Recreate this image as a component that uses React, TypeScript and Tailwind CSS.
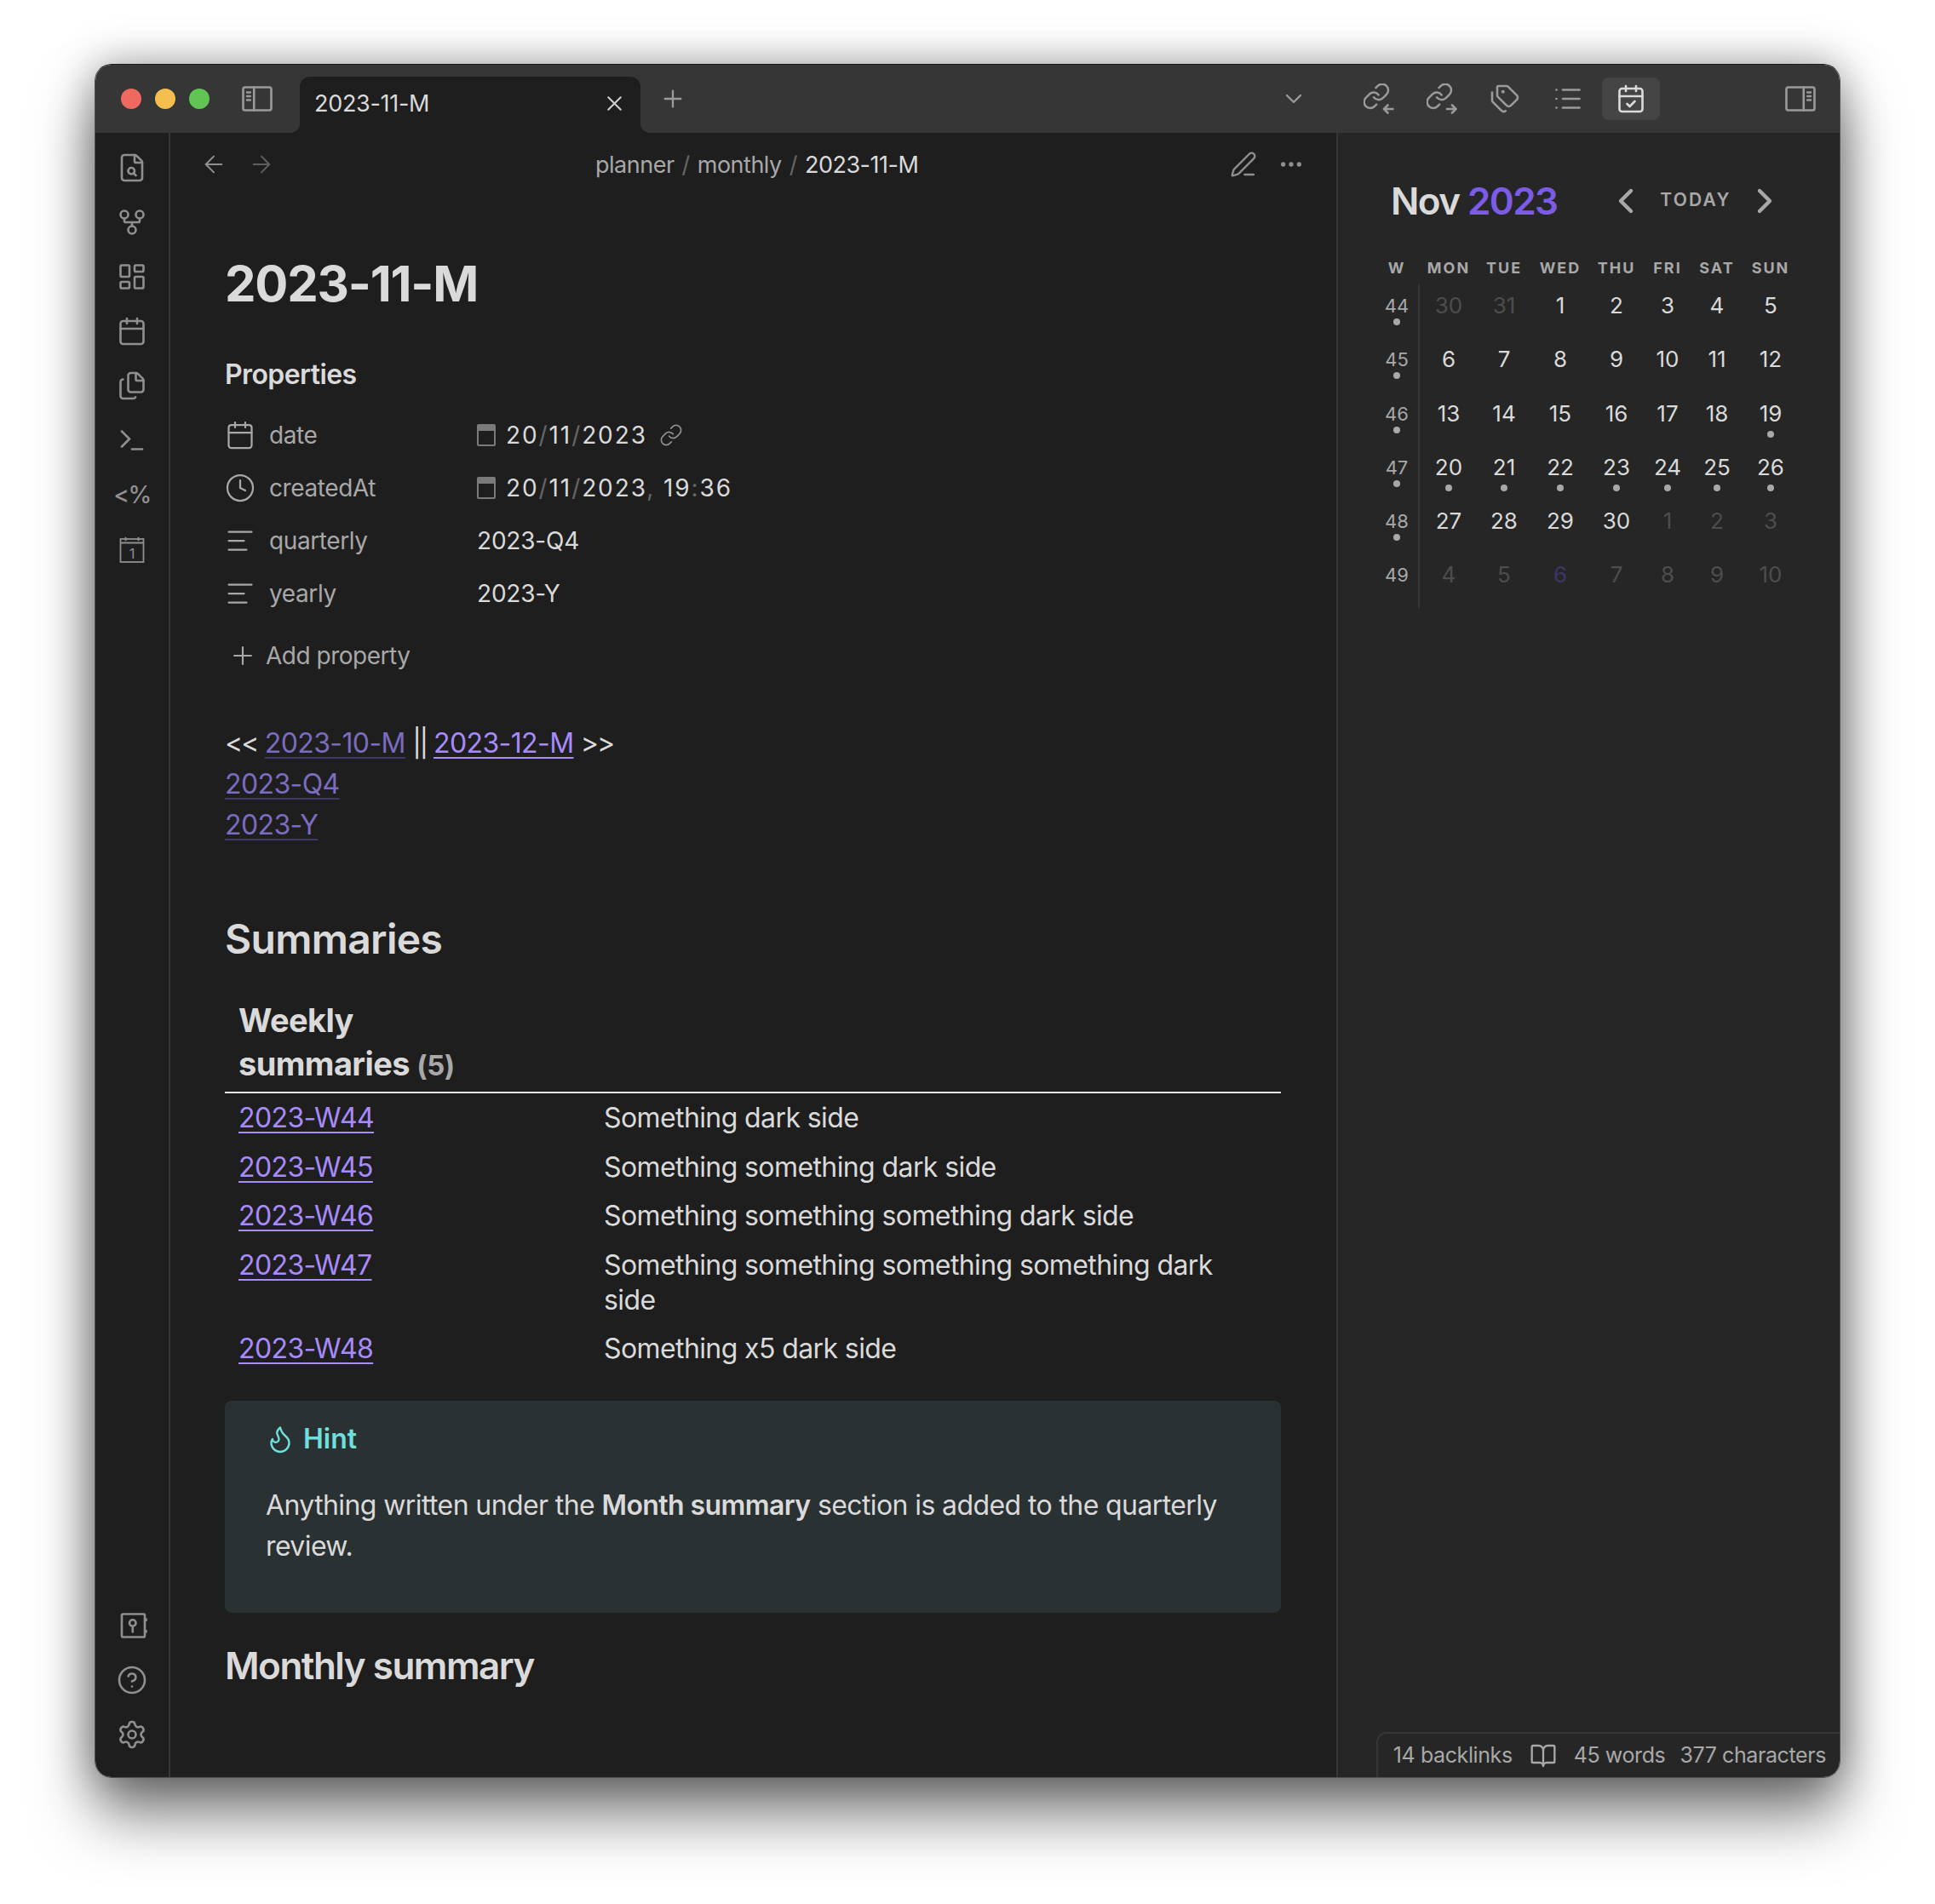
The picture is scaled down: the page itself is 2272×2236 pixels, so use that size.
import {
  ArrowLeft,
  ArrowRight,
  AlignLeft,
  BookOpen,
  Calendar,
  CalendarCheck,
  ChevronDown,
  ChevronLeft,
  ChevronRight,
  CircleHelp,
  Clock,
  Ellipsis,
  Files,
  FileSearch,
  Flame,
  GitFork,
  LayoutDashboard,
  Link,
  List,
  PenLine,
  Plus,
  Settings,
  Tags,
  Terminal,
  X,
} from 'lucide-react'
import type { ReactNode } from 'react'

const CHAIN_A = 'M10 13a5 5 0 0 0 7.54.54l3-3a5 5 0 0 0-7.07-7.07l-1.72 1.71'
const CHAIN_B = 'M14 11a5 5 0 0 0-7.54-.54l-3 3a5 5 0 0 0 7.07 7.07l1.71-1.71'

function Svg({ children, size = 36 }: { children: ReactNode; size?: number }) {
  return (
    <svg
      width={size}
      height={size}
      viewBox="0 0 24 24"
      fill="none"
      stroke="currentColor"
      strokeWidth={1.75}
      strokeLinecap="round"
      strokeLinejoin="round"
    >
      {children}
    </svg>
  )
}

function LinksIn() {
  return (
    <Svg>
      <g transform="translate(-1.500 -1.500) scale(.95)">
        <path d={CHAIN_A} />
        <path d={CHAIN_B} />
      </g>
      <path d="M23 20h-7M19 17l-3 3 3 3" />
    </Svg>
  )
}

function LinksOut() {
  return (
    <Svg>
      <g transform="translate(-1.500 -1.500) scale(.95)">
        <path d={CHAIN_A} />
        <path d={CHAIN_B} />
      </g>
      <path d="M16 20h7M20 17l3 3-3 3" />
    </Svg>
  )
}

function SidebarLeft() {
  return (
    <Svg>
      <rect x="1" y="3" width="22" height="18" rx="1.5" />
      <path d="M9.500 3v18M4 7h2.500M4 10h2.500M4 13h2.500" />
    </Svg>
  )
}

function SidebarRight() {
  return (
    <Svg>
      <rect x="1" y="3" width="22" height="18" rx="1.5" />
      <path d="M14.500 3v18M17.500 7H20M17.500 10H20M17.500 13H20" />
    </Svg>
  )
}

function VaultIcon() {
  return (
    <Svg>
      <rect x="4" y="3" width="18" height="18" rx="1" />
      <circle cx="12.500" cy="10" r="2.500" />
      <path d="M12.500 12.500V17M23 7v1M23 16v1" />
    </Svg>
  )
}

function DayIcon() {
  return (
    <svg width="36" height="36" viewBox="0 0 24 24" fill="none" stroke="currentColor" strokeWidth={1.2}>
      <rect x="3" y="4" width="18" height="18" />
      <path d="M3 7h18M7 2.500v3M17 2.500v3" />
      <text x="12" y="19" textAnchor="middle" fontSize="11" fill="currentColor" stroke="none" fontFamily="Inter, sans-serif">
        1
      </text>
    </svg>
  )
}

function DateGlyph() {
  return (
    <span className="mr-[12px] flex h-[26px] w-[22px] flex-col overflow-hidden rounded-[2px] border-2 border-[#7a7a7a]">
      <span className="h-[6px] bg-[#7a7a7a]" />
    </span>
  )
}

function Sep({ children }: { children: string }) {
  return <span className="text-[#666666]">{children}</span>
}

function RibbonItem({ children }: { children: ReactNode }) {
  return <div className="flex h-[64px] items-center justify-center">{children}</div>
}

function TitleBar() {
  return (
    <div className="flex h-[80px] shrink-0 items-center bg-[#363636] pl-[30px] pr-[28px] text-[#9a9a9a]">
      <div className="flex gap-[16px]">
        <span className="size-[24px] rounded-full bg-[#ee6a5f]" />
        <span className="size-[24px] rounded-full bg-[#f5bf4f]" />
        <span className="size-[24px] rounded-full bg-[#61c554]" />
      </div>
      <div className="ml-[38px] flex w-[36px]">
        <SidebarLeft />
      </div>
      <div className="relative ml-[32px] flex h-[66px] w-[400px] items-center justify-between self-end rounded-t-[12px] bg-[#1e1e1e] pl-[17px] pr-[16px]">
        <span className="absolute bottom-0 left-[-12px] size-[12px] bg-[radial-gradient(circle_at_0_0,transparent_12px,#1e1e1e_12.500px)]" />
        <span className="absolute bottom-0 right-[-12px] size-[12px] bg-[radial-gradient(circle_at_100%_0,transparent_12px,#1e1e1e_12.500px)]" />
        <span className="mb-[2px] text-[27px] leading-[36px] tracking-[-0.3px] text-[#dadada]">2023-11-M</span>
        <X size={29} strokeWidth={1.75} className="mb-[4px] text-[#cfcfcf]" />
      </div>
      <div className="ml-[22px]">
        <Plus size={32} strokeWidth={1.75} />
      </div>
      <div className="ml-auto mr-[50px]">
        <ChevronDown size={32} strokeWidth={1.75} />
      </div>
      <div className="flex gap-[6px]">
        <div className="flex h-[50px] w-[68px] items-center justify-center">
          <LinksIn />
        </div>
        <div className="flex h-[50px] w-[68px] items-center justify-center">
          <LinksOut />
        </div>
        <div className="flex h-[50px] w-[68px] items-center justify-center">
          <Tags size={36} strokeWidth={1.75} />
        </div>
        <div className="flex h-[50px] w-[68px] items-center justify-center">
          <List size={36} strokeWidth={1.75} />
        </div>
        <div className="flex h-[50px] w-[68px] items-center justify-center rounded-[8px] bg-[#454545] text-[#dadada]">
          <CalendarCheck size={36} strokeWidth={1.75} />
        </div>
      </div>
      <div className="ml-[147px] flex w-[36px]">
        <SidebarRight />
      </div>
    </div>
  )
}

function Ribbon() {
  return (
    <div className="flex w-[88px] shrink-0 flex-col border-r-2 border-[#363636] bg-[#1e1e1e] pb-[18px] pt-[9px] text-[#8f8f8f]">
      <RibbonItem><FileSearch size={36} strokeWidth={1.75} /></RibbonItem>
      <RibbonItem><GitFork size={36} strokeWidth={1.75} /></RibbonItem>
      <RibbonItem><LayoutDashboard size={36} strokeWidth={1.75} /></RibbonItem>
      <RibbonItem><Calendar size={36} strokeWidth={1.75} /></RibbonItem>
      <RibbonItem><Files size={36} strokeWidth={1.75} /></RibbonItem>
      <RibbonItem><Terminal size={36} strokeWidth={1.75} /></RibbonItem>
      <RibbonItem><span className="text-[28px] font-medium leading-none tracking-[-1.5px]">&lt;%</span></RibbonItem>
      <RibbonItem><DayIcon /></RibbonItem>
      <div className="mt-auto">
        <RibbonItem><VaultIcon /></RibbonItem>
        <RibbonItem><CircleHelp size={36} strokeWidth={1.75} /></RibbonItem>
        <RibbonItem><Settings size={36} strokeWidth={1.75} /></RibbonItem>
      </div>
    </div>
  )
}

function PropRow({ icon, label, children }: { icon: ReactNode; label: string; children: ReactNode }) {
  return (
    <div className="flex h-[62px] items-center text-[28px]">
      <span className="flex w-[36px] justify-center text-[#a8a8a8]">{icon}</span>
      <span className="ml-[16px] w-[244px] tracking-[-0.4px] text-[#a8a8a8]">{label}</span>
      <span className="flex items-center tracking-[-0.2px] text-[#dadada]">{children}</span>
    </div>
  )
}

const WEEKLY = [
  ['2023-W44', 'Something dark side'],
  ['2023-W45', 'Something something dark side'],
  ['2023-W46', 'Something something something dark side'],
  ['2023-W47', 'Something something something something dark side'],
  ['2023-W48', 'Something x5 dark side'],
]

function Note() {
  const softLink = 'text-[#7b6cc0] underline decoration-[#40386a] decoration-2 underline-offset-[5px]'
  const hardLink = 'text-[#a88bfa] underline decoration-2 underline-offset-[5px]'
  return (
    <div className="min-w-0 flex-1 overflow-hidden bg-[#1e1e1e]">
      <div className="relative flex h-[75px] items-center pb-[2px] pl-[35px] pr-[37px] text-[#8f8f8f]">
        <ArrowLeft size={32} strokeWidth={1.5} />
        <ArrowRight size={32} strokeWidth={1.5} className="ml-[24px] text-[#5e5e5e]" />
        <div className="ml-[376px] mt-[4px] flex items-center gap-[9px] text-[27px] tracking-[-0.5px] text-[#a8a8a8]">
          <span>planner</span>
          <span className="text-[#666666]">/</span>
          <span>monthly</span>
          <span className="text-[#666666]">/</span>
          <span className="text-[#dadada]">2023-11-M</span>
        </div>
        <PenLine size={32} strokeWidth={1.75} className="ml-auto" />
        <Ellipsis size={32} strokeWidth={2} className="ml-[24px]" />
      </div>

      <div className="pl-[64px] pr-[65px] text-[32px] tracking-[-0.6px] text-[#dadada]">
        <h1 className="mt-[67px] text-[58px] font-bold leading-[70px] tracking-[-1.2px]">2023-11-M</h1>
        <div className="mt-[52px] font-semibold leading-[40px]">Properties</div>
        <div className="mt-[20px]">
          <PropRow icon={<Calendar size={36} strokeWidth={1.5} />} label="date">
            <DateGlyph />
            <span className="tracking-[1.9px]">
              20<Sep>/</Sep>11<Sep>/</Sep>2023
            </span>
            <Link size={28} strokeWidth={1.5} className="ml-[14px] text-[#8f8f8f]" />
          </PropRow>
          <PropRow icon={<Clock size={36} strokeWidth={1.5} />} label="createdAt">
            <DateGlyph />
            <span className="tracking-[1.9px]">
              20<Sep>/</Sep>11<Sep>/</Sep>2023<Sep>,</Sep> 19<Sep>:</Sep>36
            </span>
          </PropRow>
          <PropRow icon={<AlignLeft size={36} strokeWidth={1.5} />} label="quarterly">2023-Q4</PropRow>
          <PropRow icon={<AlignLeft size={36} strokeWidth={1.5} />} label="yearly">2023-Y</PropRow>
        </div>
        <div className="mt-[17px] flex h-[50px] items-center pl-[4px] text-[28px] tracking-[-0.5px] text-[#a8a8a8]">
          <Plus size={34} strokeWidth={1.5} />
          <span className="ml-[10px]">Add property</span>
        </div>

        <div className="mt-[54px] leading-[48px]">
          <div>
            <span className="tracking-[-2px]">&lt;&lt;</span> <span className={softLink}>2023-10-M</span>{' '}
            <span className="tracking-[-2.500px]">||</span> <span className={hardLink}>2023-12-M</span>{' '}
            <span className="tracking-[-2px]">&gt;&gt;</span>
          </div>
          <div><span className={softLink}>2023-Q4</span></div>
          <div><span className={softLink}>2023-Y</span></div>
        </div>

        <h2 className="mt-[80px] text-[48px] font-semibold leading-[60px] tracking-[-0.7px]">Summaries</h2>

        <table className="mt-[40px] w-full table-fixed border-collapse text-left">
          <thead>
            <tr className="border-b-2 border-[#e5e5e5]">
              <th className="w-[429px] px-[16px] pb-[5px] text-[38px] font-bold leading-[51px] tracking-[-0.6px]">
                Weekly
                <br />
                summaries <span className="text-[33px] text-[#a8a8a8]">(5)</span>
              </th>
              <th />
            </tr>
          </thead>
          <tbody>
            {WEEKLY.map(([week, text]) => (
              <tr key={week}>
                <td className="px-[16px] py-[8px] align-top leading-[41.5px]">
                  <span className={hardLink}>{week}</span>
                </td>
                <td className="px-[16px] py-[8px] align-top leading-[41px]">{text}</td>
              </tr>
            ))}
          </tbody>
        </table>

        <div className="mt-[33px] rounded-[8px] bg-[#2a3133] pb-[54px] pl-[48px] pr-[48px] pt-[21px] leading-[48px]">
          <div className="flex items-center font-semibold text-[#6fdfdb]">
            <Flame size={36} strokeWidth={1.6} className="-ml-[1px]" />
            <span className="ml-[9px] tracking-[0px]">Hint</span>
          </div>
          <p className="mt-[30px]">
            Anything written under the <b className="font-semibold">Month summary</b> section is added to the quarterly
            review.
          </p>
        </div>

        <h2 className="mt-[34px] text-[44px] font-semibold leading-[56px] tracking-[-1.5px]">Monthly summary</h2>
      </div>
    </div>
  )
}

const COLS = 'grid grid-cols-[52px_70px_60px_72px_60px_60px_56px_70px]'
const HEADS = ['W', 'MON', 'TUE', 'WED', 'THU', 'FRI', 'SAT', 'SUN']

type Day = { n: number; dim?: boolean; dot?: boolean; accent?: boolean }

const d = (n: number, opts: Partial<Day> = {}): Day => ({ n, ...opts })

const WEEKS: { w: number; dot: boolean; days: Day[] }[] = [
  { w: 44, dot: true, days: [d(30, { dim: true }), d(31, { dim: true }), d(1), d(2), d(3), d(4), d(5)] },
  { w: 45, dot: true, days: [d(6), d(7), d(8), d(9), d(10), d(11), d(12)] },
  { w: 46, dot: true, days: [d(13), d(14), d(15), d(16), d(17), d(18), d(19, { dot: true })] },
  {
    w: 47,
    dot: true,
    days: [20, 21, 22, 23, 24, 25, 26].map((n) => d(n, { dot: true })),
  },
  { w: 48, dot: true, days: [d(27), d(28), d(29), d(30), d(1, { dim: true }), d(2, { dim: true }), d(3, { dim: true })] },
  {
    w: 49,
    dot: false,
    days: [d(4, { dim: true }), d(5, { dim: true }), d(6, { accent: true }), d(7, { dim: true }), d(8, { dim: true }), d(9, { dim: true }), d(10, { dim: true })],
  },
]

function CalendarPanel() {
  return (
    <div className="flex w-[591px] shrink-0 flex-col border-l-2 border-[#363636] bg-[#262626]">
      <div className="ml-[62px] mt-[56px] flex items-center">
        <div className="w-[257px] text-[44px] font-semibold leading-[46px] tracking-[-1.6px] text-[#dadada]">
          Nov <span className="text-[#7c5ce6]">2023</span>
        </div>
        <ChevronLeft size={48} strokeWidth={2.2} className="-mx-[5px] text-[#a8a8a8]" />
        <div className="mb-[2px] w-[126px] text-center text-[21px] font-semibold tracking-[2.2px] text-[#a8a8a8]">TODAY</div>
        <ChevronRight size={48} strokeWidth={2.2} className="-mx-[6px] text-[#a8a8a8]" />
      </div>

      <div className={`${COLS} ml-[43px] mt-[43px] text-center text-[18px] font-bold leading-[24px] tracking-[2px] text-[#a8a8a8]`}>
        {HEADS.map((h) => (
          <div key={h}>{h}</div>
        ))}
      </div>

      <div className="relative ml-[43px] mt-[7px]">
        <span className="absolute bottom-0 left-[51px] top-0 w-[2px] bg-[#363636]" />
        {WEEKS.map((week) => (
          <div key={week.w} className={`${COLS} h-[63.25px]`}>
            <div className="flex flex-col items-center pt-[12px] text-[22px] leading-[26px] text-[#a8a8a8]">
              <span>{week.w}</span>
              {week.dot && <span className="mt-[2px] size-[8px] rounded-full bg-[#a8a8a8]" />}
            </div>
            {week.days.map((day, i) => (
              <div
                key={i}
                className={`flex flex-col items-center pt-[9px] text-[26px] leading-[32px] ${
                  day.accent ? 'text-[#3d3566]' : day.dim ? 'text-[#4d4d4d]' : 'text-[#dadada]'
                }`}
              >
                <span>{day.n}</span>
                {day.dot && <span className="mt-[4px] size-[8px] rounded-full bg-[#a8a8a8]" />}
              </div>
            ))}
          </div>
        ))}
      </div>

      <div className="mt-auto flex h-[53px] items-center self-end rounded-tl-[12px] border-l-2 border-t-2 border-[#363636] pl-[18px] pr-[16px] text-[25px] tracking-[-0.4px] text-[#a8a8a8]">
        <span>14 backlinks</span>
        <BookOpen size={32} strokeWidth={1.75} className="ml-[20px]" />
        <span className="ml-[20px]">45 words</span>
        <span className="ml-[17px]">377 characters</span>
      </div>
    </div>
  )
}

export default function App() {
  return (
    <div className="min-h-[2236px] bg-white pl-[111px] pt-[75px] [font-family:Inter,sans-serif]">
      <div className="flex h-[2013px] w-[2050px] flex-col overflow-hidden rounded-[20px] border border-[#505050] border-t-[#1c1c1c] shadow-[0_44px_70px_rgba(0,0,0,0.5),0_0_50px_rgba(0,0,0,0.35)]">
        <TitleBar />
        <div className="flex min-h-0 flex-1">
          <Ribbon />
          <Note />
          <CalendarPanel />
        </div>
      </div>
    </div>
  )
}
